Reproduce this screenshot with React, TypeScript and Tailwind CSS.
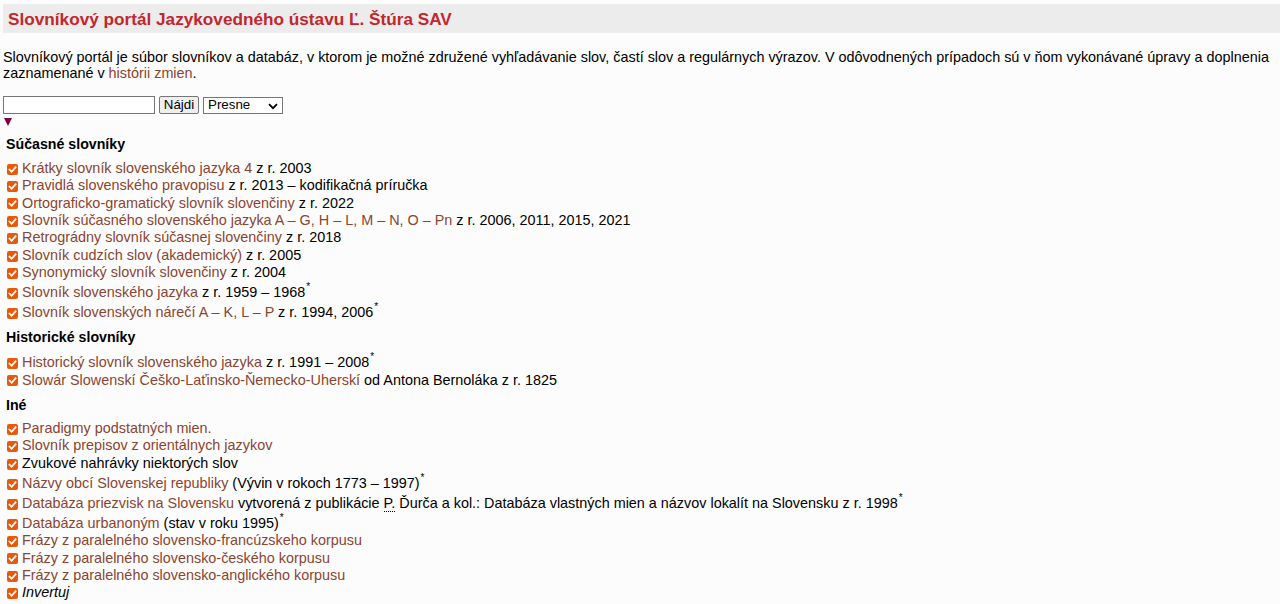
import React from 'react'

type Part = { t: string; link?: boolean; sup?: boolean; abbr?: boolean; italic?: boolean }
type Row = Part[]

const L = (t: string): Part => ({ t, link: true })
const T = (t: string): Part => ({ t })

const current: Row[] = [
    [L('Krátky slovník slovenského jazyka 4'), T(' z r. 2003')],
    [L('Pravidlá slovenského pravopisu'), T(' z r. 2013 – kodifikačná príručka')],
    [L('Ortograficko-gramatický slovník slovenčiny'), T(' z r. 2022')],
    [L('Slovník súčasného slovenského jazyka A – G, H – L, M – N, O – Pn'), T(' z r. 2006, 2011, 2015, 2021')],
    [L('Retrográdny slovník súčasnej slovenčiny'), T(' z r. 2018')],
    [L('Slovník cudzích slov (akademický)'), T(' z r. 2005')],
    [L('Synonymický slovník slovenčiny'), T(' z r. 2004')],
    [L('Slovník slovenského jazyka'), T(' z r. 1959 – 1968'), { t: '*', sup: true }],
    [L('Slovník slovenských nárečí A – K, L – P'), T(' z r. 1994, 2006'), { t: '*', sup: true }],
]

const historic: Row[] = [
    [L('Historický slovník slovenského jazyka'), T(' z r. 1991 – 2008'), { t: '*', sup: true }],
    [L('Slowár Slowenskí Češko-Laťinsko-Ňemecko-Uherskí'), T(' od Antona Bernoláka z r. 1825')],
]

const other: Row[] = [
    [L('Paradigmy podstatných mien.')],
    [L('Slovník prepisov z orientálnych jazykov')],
    [T('Zvukové nahrávky niektorých slov')],
    [L('Názvy obcí Slovenskej republiky'), T(' (Vývin v rokoch 1773 – 1997)'), { t: '*', sup: true }],
    [
        L('Databáza priezvisk na Slovensku'),
        T(' vytvorená z publikácie '),
        { t: 'P.', abbr: true },
        T(' Ďurča a kol.: Databáza vlastných mien a názvov lokalít na Slovensku z r. 1998'),
        { t: '*', sup: true },
    ],
    [L('Databáza urbanoným'), T(' (stav v roku 1995)'), { t: '*', sup: true }],
    [L('Frázy z paralelného slovensko-francúzskeho korpusu')],
    [L('Frázy z paralelného slovensko-českého korpusu')],
    [L('Frázy z paralelného slovensko-anglického korpusu')],
    [{ t: 'Invertuj', italic: true }],
]

function Check() {
    return (
        <span className="inline-flex items-center justify-center w-[11px] h-[11px] rounded-[2px] bg-[#e8590c] ml-[7px] mr-[4px] mt-[1px] shrink-0">
            <svg width="9" height="9" viewBox="0 0 9 9" fill="none">
                <path d="M1.5 4.6 L3.6 6.7 L7.6 2.2" stroke="white" strokeWidth="1.7" strokeLinecap="square" />
            </svg>
        </span>
    )
}

function Item({ row }: { row: Row }) {
    const hasSup = row.some((p) => p.sup)
    return (
        <div className={`flex items-end ${hasSup ? 'h-[20px]' : 'h-[17.4px]'}`}>
            <div className="flex items-center h-[17.4px]">
                <Check />
                <span className="whitespace-nowrap text-[14.4px]">
                    {row.map((p, i) => {
                        if (p.link) return <a key={i} className="text-[#8a4530]">{p.t}</a>
                        if (p.sup) return <span key={i} className="text-[10px] relative top-[-7px] ml-[1px]">{p.t}</span>
                        if (p.abbr) return <abbr key={i} className="no-underline border-b border-dotted border-black">{p.t}</abbr>
                        if (p.italic) return <i key={i}>{p.t}</i>
                        return <span key={i}>{p.t}</span>
                    })}
                </span>
            </div>
        </div>
    )
}

export default function App() {
    return (
        <div className="min-h-[604px] bg-[#fcfcfc] text-black text-[14px] font-['Liberation_Sans',Arial,sans-serif] pt-[4px]">
            <div className="ml-[3px] h-[29px] bg-[#ececec] flex items-center pl-[5px]">
                <h1 className="text-[17.2px] font-bold text-[#c1272d] leading-none mt-[2px]">Slovníkový portál Jazykovedného ústavu Ľ. Štúra SAV</h1>
            </div>
            <p className="ml-[3px] mt-[16px] leading-[16px] text-[14.4px]">
                Slovníkový portál je súbor slovníkov a databáz, v ktorom je možné združené vyhľadávanie slov, častí slov a regulárnych výrazov. V odôvodnených prípadoch sú v ňom vykonávané úpravy a doplnenia zaznamenané v <a className="text-[#8a4530]">histórii zmien</a>.
            </p>
            <div className="ml-[3px] mt-[15px] flex items-center gap-[4px] text-[13.33px]">
                <input type="text" className="w-[152px] h-[18px] border border-[#767676] bg-white px-[2px]" />
                <button className="h-[18px] w-[40px] border border-[#767676] bg-[#efefef] rounded-[2px] leading-none">Nájdi</button>
                <div className="relative w-[80px] h-[17px] border border-[#767676] bg-white flex items-center pl-[4px] leading-none">
                    Presne
                    <svg className="absolute right-[4px] top-[5px]" width="10" height="7" viewBox="0 0 10 7" fill="none">
                        <path d="M1 1.2 L5 5.2 L9 1.2" stroke="black" strokeWidth="1.8" />
                    </svg>
                </div>
            </div>
            <div className="ml-[4px] mt-[4px] w-0 h-0 border-l-[4.5px] border-r-[4.5px] border-t-[8px] border-l-transparent border-r-transparent border-t-[#7c0040]" />
            <div className="ml-[6px] mt-[10px] font-bold h-[18px] flex items-center text-[14.2px]">Súčasné slovníky</div>
            <div className="mt-[6px]">
                {current.map((r, i) => <Item key={i} row={r} />)}
            </div>
            <div className="ml-[6px] mt-[7px] font-bold h-[18px] flex items-center text-[14.2px]">Historické slovníky</div>
            <div className="mt-[5px]">
                {historic.map((r, i) => <Item key={i} row={r} />)}
            </div>
            <div className="ml-[6px] mt-[8px] font-bold h-[18px] flex items-center text-[14.2px]">Iné</div>
            <div className="mt-[5px]">
                {other.map((r, i) => <Item key={i} row={r} />)}
            </div>
        </div>
    )
}
